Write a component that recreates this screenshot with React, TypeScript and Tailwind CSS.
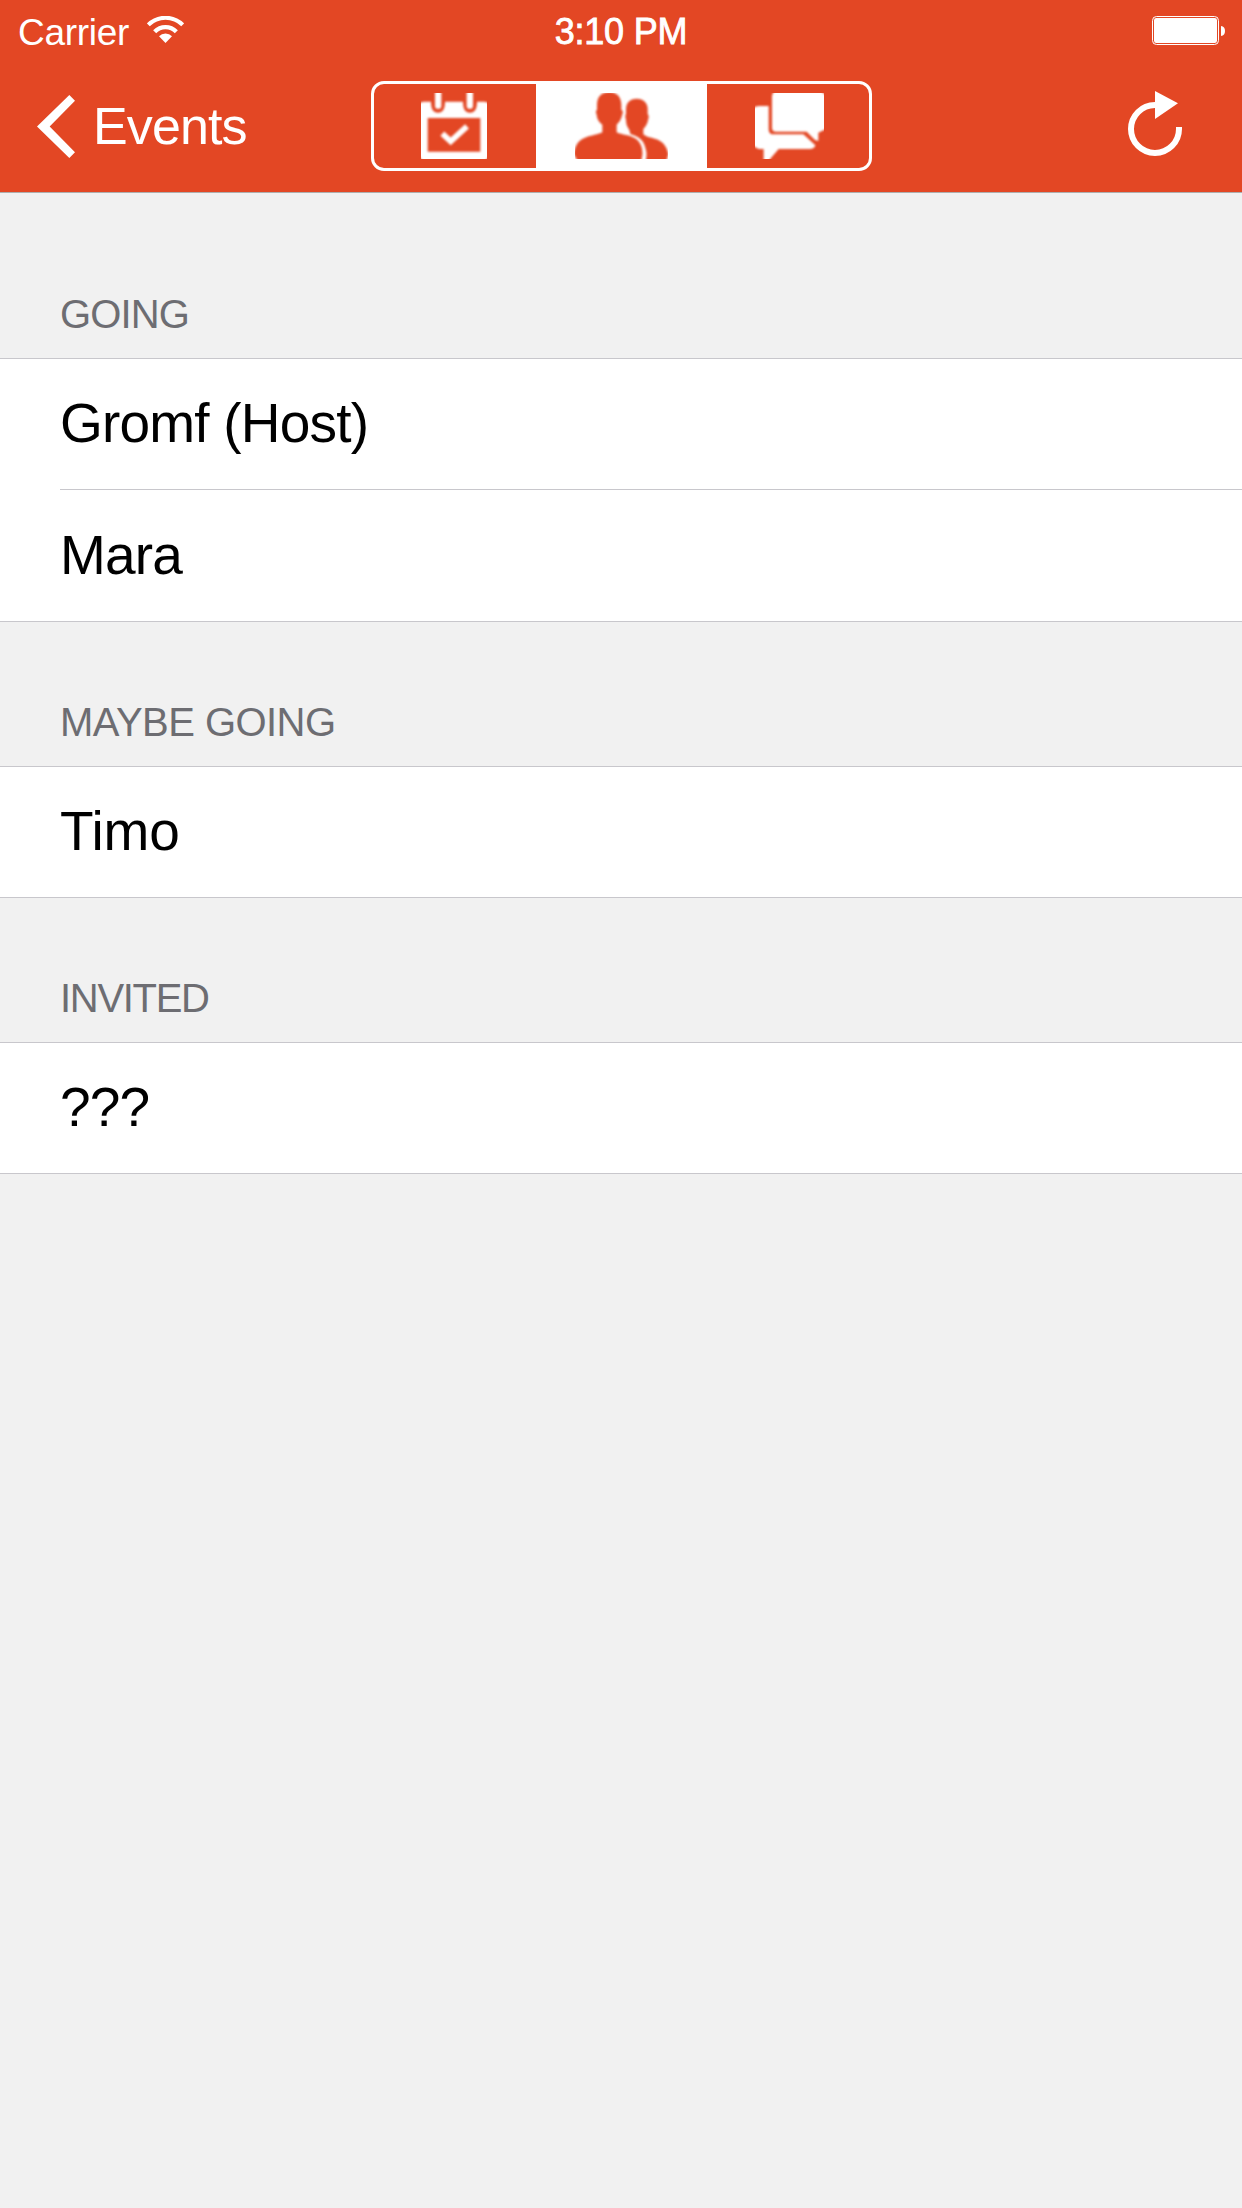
import React from "react";

const sections = [
  { title: "GOING", titleTracking: "tracking-[-0.9px]", people: [{ name: "Gromf (Host)", tracking: "tracking-[-0.8px]" }, { name: "Mara", tracking: "tracking-[-0.8px]" }] },
  { title: "MAYBE GOING", titleTracking: "tracking-[-0.55px]", people: [{ name: "Timo", tracking: "tracking-[-0.1px]" }] },
  { title: "INVITED", titleTracking: "tracking-[-1.3px]", people: [{ name: "???", tracking: "tracking-[-0.8px]" }] },
];

function WifiIcon() {
  return (
    <svg className="ml-[18px] mt-[16px] h-[27px] w-[37px] shrink-0" viewBox="441 48 111 81" fill="none" stroke="#fff">
      <path d="M445 74.500 A73 73 0 0 1 548 74.500" strokeWidth="12" />
      <path d="M464 95 A46 46 0 0 1 529 95" strokeWidth="13" />
      <path d="M477 109 A27 27 0 0 1 516 109 L496.500 129 Z" fill="#fff" stroke="none" />
    </svg>
  );
}

function BatteryIcon() {
  return (
    <svg className="mr-[17px] mt-[16px] h-[29px] w-[73px]" viewBox="210 48 219 87" fill="#fff">
      <rect x="211.500" y="49.500" width="198" height="84" rx="12" fill="none" stroke="#fff" strokeWidth="3" />
      <rect x="216" y="54" width="189" height="75" rx="7" />
      <path d="M417 78 Q429 80 429 93 Q429 106 417 108 Z" />
    </svg>
  );
}

function BackIcon() {
  return (
    <svg className="h-[63px] w-[38px]" viewBox="111 285 114 189" fill="#fff">
      <path d="M208 285 L225 302 L149 379.500 L225 457 L208 474 L111 379.500 Z" />
    </svg>
  );
}

function RefreshIcon() {
  return (
    <svg className="h-[65px] w-[54px]" viewBox="138 273 162 195">
      <path d="M291 381 V387 A72 72 0 1 1 219 315" fill="none" stroke="#fff" strokeWidth="18" />
      <path d="M219 273 L288 310 L219 357 Z" fill="#fff" />
    </svg>
  );
}

function CalendarIcon() {
  return (
    <div className="h-[66px] w-[66px] overflow-hidden">
      <svg className="h-full w-full blur-[0.9px]" viewBox="183 69 198 198" overflow="visible">
        <path
          fill="#fff"
          fillRule="evenodd"
          d="M173 104 Q183 95 190 95 H213 C213 116 219 128 234 128 C249 128 255 116 255 95 H309 C309 116 315 128 330 128 C345 128 351 116 351 95 H374 Q381 95 391 104 V256 L373 277 H191 L173 256 Z M203 144 V245 H361 V144 Z"
        />
        <path d="M234.500 66 V107 M329.500 66 V107" stroke="#fff" strokeWidth="19" strokeLinecap="round" />
        <path d="M247 191 L272 214 L321 169" fill="none" stroke="#fff" strokeWidth="17" />
      </svg>
    </div>
  );
}

function PeopleIcon() {
  return (
    <div className="h-[66px] w-[93px] overflow-hidden">
      <svg className="h-full w-full blur-[0.9px]" viewBox="135 69 279 198" overflow="visible" fill="#e34724">
        <path d="M238 66 C262 67 275 82 274 108 L274 119 Q281 123 277 133 C274 149 267 158 260 164 V187 C276 195 300 195 315 205 C332 216 339 235 337 256 L333 277 H145 L131 252 C136 224 146 210 165 203 C183 196 207 193 217 187 V164 C207 156 201 148 200 134 Q195 123 201 119 V105 C201 80 214 67 238 66 Z" />
        <path d="M320 86 C342 86 354 100 353 119 L353 132 Q359 138 354 150 C352 164 345 171 340 177 V193 C350 203 372 204 385 210 C402 218 412 235 415 253 L408 277 H346 C350 262 351 250 347 237 C342 213 331 201 301 192 L298 180 C291 169 288 162 288 149 Q284 138 288 132 V118 C288 99 299 86 320 86 Z" />
      </svg>
    </div>
  );
}

function ChatIcon() {
  return (
    <div className="h-[66px] w-[69px] overflow-hidden">
      <svg className="h-full w-full blur-[0.9px]" viewBox="165 69 207 198" overflow="visible" fill="#fff">
        <path d="M227 59 H359 L382 80 V175 L355 188 V213 L345 210 L320 185 H228 Q216 185 216 174 V77 Q217 69 227 59 Z" />
        <path d="M155 119 Q165 108 176 108 H206 V179 Q207 193 220 193 H310 L346 226 Q344 236 332 237 H236 L212 265 L206 275 H191 V237 H176 L155 226 Z" />
      </svg>
    </div>
  );
}

export default function App() {
  return (
    <div className="h-[2208px] w-[1242px] overflow-hidden bg-[#f1f1f1] font-['Liberation_Sans',Arial,sans-serif]">
      <header className="h-[193px] border-b border-[#aeaeae] bg-[#e34724] text-white">
        <div className="grid h-[60px] grid-cols-3">
          <div className="flex items-start pl-[18px]">
            <span className="mt-[14px] text-[37px] leading-none tracking-[-0.3px]">Carrier</span>
            <WifiIcon />
          </div>
          <div className="mt-[14px] text-center text-[36px] leading-none tracking-[-0.2px] [-webkit-text-stroke:0.8px_white]">3:10 PM</div>
          <div className="flex items-start justify-end">
            <BatteryIcon />
          </div>
        </div>
        <nav className="grid h-[132px] grid-cols-[371px_501px_370px]">
          <button className="flex items-start pl-[37px] pt-[35px]">
            <BackIcon />
            <span className="ml-[18px] mt-[5px] text-[52px] leading-none tracking-[-0.9px]">Events</span>
          </button>
          <div className="mt-[21px] grid h-[90px] grid-cols-[162px_171px_162px] overflow-hidden rounded-[13px] border-[3px] border-white">
            <button className="flex items-start pl-[47px] pt-[9px]">
              <CalendarIcon />
            </button>
            <button className="flex items-start bg-white pl-[39px] pt-[9px]">
              <PeopleIcon />
            </button>
            <button className="flex items-start pl-[48px] pt-[9px]">
              <ChatIcon />
            </button>
          </div>
          <button className="flex items-start justify-end pr-[60px] pt-[31px]">
            <RefreshIcon />
          </button>
        </nav>
      </header>
      <main className="pt-[21px]">
        {sections.map((section) => (
          <section key={section.title}>
            <h2
              className={`flex h-[144px] items-end pb-[24px] pl-[60px] text-[40px] leading-none text-[#6d6d72] ${section.titleTracking}`}
            >
              {section.title}
            </h2>
            <ul className="border-y border-[#c8c7cc] bg-white">
              {section.people.map((person, index) => (
                <li key={person.name} className="pl-[60px]">
                  <div
                    className={`text-[55px] leading-none text-black ${person.tracking} ${
                      index > 0 ? "h-[132px] border-t border-[#c8c7cc] pt-[38px]" : "h-[130px] pt-[37px]"
                    }`}
                  >
                    {person.name}
                  </div>
                </li>
              ))}
            </ul>
          </section>
        ))}
      </main>
    </div>
  );
}
